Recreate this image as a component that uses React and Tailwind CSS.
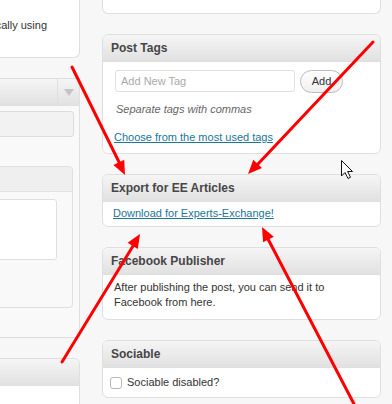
import React from 'react';

const font = "font-['Liberation_Sans',Arial,sans-serif]";

const Box = ({ title, className = '', children }) => (
  <div className={`bg-white border border-[#dfdfdf] rounded-[6px] overflow-hidden flex flex-col ${className}`}>
    <div className="h-[27px] shrink-0 border-b border-[#dfdfdf] bg-gradient-to-b from-[#f5f5f5] to-[#e1e1e1] flex items-center pl-[8px]">
      <h3 className="text-[12px] font-bold text-[#464646] leading-none">{title}</h3>
    </div>
    {children}
  </div>
);

const Arrows = () => (
  <svg className="absolute inset-0 pointer-events-none" width="392" height="404" viewBox="0 0 392 404">
    <g stroke="#ff0000" strokeWidth="3" strokeLinecap="round">
      <line x1="72" y1="67" x2="119" y2="162" />
      <line x1="373" y1="42" x2="258" y2="164" />
      <line x1="62" y1="362" x2="133" y2="246" />
      <line x1="354" y1="404" x2="268" y2="239" />
    </g>
    <g fill="#ff0000">
      <polygon points="125,175 113.4,165.1 124.2,159.8" />
      <polygon points="248,174 253.3,159.7 262,168" />
      <polygon points="140,234 137.8,249.1 127.6,242.8" />
      <polygon points="262,227 273.8,236.7 263.1,242.2" />
    </g>
    {/* mouse pointer */}
    <path
      d="M341.5 160.5 L341.5 176 L345 172.5 L348 178.5 L350.5 177.3 L347.6 171.5 L352.5 171.5 Z"
      fill="#ffffff"
      stroke="#111111"
      strokeWidth="1"
      strokeLinejoin="round"
    />
  </svg>
);

export default function App() {
  return (
    <div className={`relative w-[392px] h-[404px] overflow-hidden bg-[#f7f7f7] flex ${font} text-[11px] text-[#333]`}>
      {/* left column, cut off by the window edge */}
      <div className="w-[80px] shrink-0 overflow-hidden flex flex-col">
        <div className="h-[58px] shrink-0 bg-white border-r border-b border-[#dfdfdf] rounded-br-[6px] flex justify-end pr-[32px] pt-[18px] leading-[15px] whitespace-nowrap">
          <span>Revisions are saved automatically using</span>
        </div>

        <div className="mt-[20px] h-[260px] shrink-0 bg-[#f9f9f9] border-t border-r border-b border-[#dfdfdf] flex flex-col">
          <div className="h-[27px] shrink-0 flex border-b border-[#dfdfdf] bg-gradient-to-b from-[#f5f5f5] to-[#e1e1e1]">
            <div className="flex-1" />
            <div className="w-[22px] border-l border-[#dfdfdf] flex items-center justify-center">
              <div className="w-0 h-0 border-l-[5px] border-r-[5px] border-t-[7px] border-l-transparent border-r-transparent border-t-[#c4c4c4]" />
            </div>
          </div>
          <div className="mt-[5px] ml-[-6px] mr-[5px] h-[26px] shrink-0 rounded-[3px] border border-[#dcdcdc] bg-[#f2f2f2]" />
          <div className="mt-[29px] ml-[-6px] mr-[6px] h-[142px] shrink-0 rounded-[4px] border border-[#dfdfdf] overflow-hidden flex flex-col bg-[#f9f9f9]">
            <div className="h-[25px] shrink-0 bg-[#efefef] border-b border-[#e3e3e3]" />
            <div className="mt-[7px] mr-[15px] h-[61px] rounded-[3px] border border-[#dfdfdf] bg-white" />
          </div>
        </div>

        <div className="mt-[20px] flex-1 bg-white border-t border-r border-[#dfdfdf] rounded-tr-[6px] overflow-hidden">
          <div className="h-[27px] border-b border-[#dfdfdf] bg-gradient-to-b from-[#f5f5f5] to-[#e1e1e1]" />
        </div>
      </div>

      {/* right sidebar */}
      <div className="flex-1 pl-[22px] pr-[11px] flex flex-col">
        <div className="h-[14px] shrink-0 bg-white border-l border-r border-b border-[#dfdfdf] rounded-b-[6px]" />

        <Box title="Post Tags" className="mt-[20px] h-[120px] shrink-0">
          <div className="pt-[8px] pl-[12px]">
            <div className="flex items-start gap-[5px]">
              <input
                type="text"
                placeholder="Add New Tag"
                className="w-[180px] h-[22px] rounded-[3px] border border-[#dfdfdf] bg-white px-[5px] text-[11px] text-[#333] placeholder:text-[#aaa] outline-none"
              />
              <button className="w-[43px] h-[23px] rounded-full border border-[#bbb] bg-gradient-to-b from-[#fefefe] to-[#f0f0f0] text-[11px] text-[#333] leading-none">
                Add
              </button>
            </div>
            <p className="mt-[9px] pl-[1px] italic text-[#666] leading-[15px]">Separate tags with commas</p>
            <a href="#" className="mt-[13px] -ml-[1px] block text-[#21759b] underline leading-[15px]">
              Choose from the most used tags
            </a>
          </div>
        </Box>

        <Box title="Export for EE Articles" className="mt-[20px] h-[53px] shrink-0">
          <div className="pt-[3px] pl-[10px]">
            <a href="#" className="text-[#21759b] underline leading-[15px]">
              Download for Experts-Exchange!
            </a>
          </div>
        </Box>

        <Box title="Facebook Publisher" className="mt-[20px] h-[73px] shrink-0">
          <p className="pt-[5px] pl-[11px] leading-[15px]">
            After publishing the post, you can send it to
            <br />
            Facebook from here.
          </p>
        </Box>

        <Box title="Sociable" className="mt-[20px] h-[58px] shrink-0">
          <label className="pt-[7px] pl-[7px] flex items-center gap-[5px]">
            <span className="w-[12px] h-[12px] rounded-[3px] border border-[#b8b8b8] bg-white" />
            <span className="leading-[15px]">Sociable disabled?</span>
          </label>
        </Box>
      </div>

      <Arrows />
    </div>
  );
}
